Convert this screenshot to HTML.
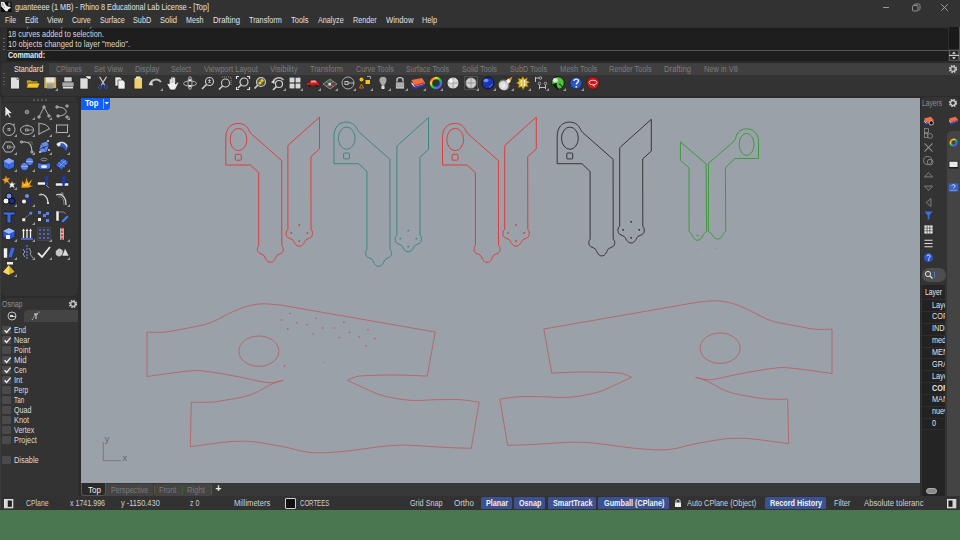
<!DOCTYPE html>
<html><head><meta charset="utf-8">
<style>
*{margin:0;padding:0;box-sizing:border-box}
html,body{width:960px;height:540px;overflow:hidden;background:#2c2c2c;font-family:"Liberation Sans",sans-serif;color:#d8d8d8}
.a{position:absolute}
.t{position:absolute;white-space:nowrap;line-height:10px}
svg{position:absolute;overflow:visible}
</style></head><body>
<div class="a" style="left:0px;top:0px;width:960px;height:27px;background:#323232;"></div>
<svg style="left:0;top:0" width="14" height="14"><rect x="1" y="1.8" width="10.5" height="10.2" fill="#0a0a0a"/><path d="M1,2 L4.3,2 L5.2,4 L7,6.3 L9.5,6.8 L10.9,7.2 L10.4,8.3 L8.2,9.4 L7.6,11.2 L5.6,11.2 L3,8.2 L1.2,6.2 Z" fill="#ededed"/><path d="M2.5,3 L3.2,6 M4,7.5 L5,7" stroke="#555" stroke-width=".6"/><ellipse cx="9.3" cy="4.2" rx="1.2" ry="2" fill="#6a6a6a"/></svg>
<div class="t" style="left:15px;top:2.2px;font-size:8.97px;color:#e2e2e2;;transform:scaleX(0.814);transform-origin:0 0;">guanteeee (1 MB) - Rhino 8 Educational Lab License - [Top]</div>
<div class="a" style="left:883px;top:6.5px;width:6px;height:0.8px;background:#9a9a9a;"></div>
<svg style="left:911px;top:3px" width="10" height="10"><rect x="1.5" y="2.5" width="5.5" height="5.5" rx="1" fill="none" stroke="#9a9a9a" stroke-width=".9"/><path d="M3,2.3 C3,1.3 3.5,1 4.5,1 H7.5 C8.5,1 9,1.5 9,2.5 V5.5 C9,6.5 8.6,7 7.5,7" fill="none" stroke="#9a9a9a" stroke-width=".9"/></svg>
<svg style="left:940px;top:3px" width="10" height="10"><path d="M1.2,1.2 L7.8,7.8 M7.8,1.2 L1.2,7.8" stroke="#a8a8a8" stroke-width=".9"/></svg>
<div class="t" style="left:5px;top:15.1px;font-size:9.08px;color:#e0e0e0;;transform:scaleX(0.751);transform-origin:0 0;">File</div>
<div class="t" style="left:25px;top:15.1px;font-size:9.08px;color:#e0e0e0;;transform:scaleX(0.830);transform-origin:0 0;">Edit</div>
<div class="t" style="left:47px;top:15.1px;font-size:9.08px;color:#e0e0e0;;transform:scaleX(0.820);transform-origin:0 0;">View</div>
<div class="t" style="left:71.75px;top:15.1px;font-size:9.08px;color:#e0e0e0;;transform:scaleX(0.774);transform-origin:0 0;">Curve</div>
<div class="t" style="left:99.5px;top:15.1px;font-size:9.08px;color:#e0e0e0;;transform:scaleX(0.791);transform-origin:0 0;">Surface</div>
<div class="t" style="left:133px;top:15.1px;font-size:9.08px;color:#e0e0e0;;transform:scaleX(0.803);transform-origin:0 0;">SubD</div>
<div class="t" style="left:160px;top:15.1px;font-size:9.08px;color:#e0e0e0;;transform:scaleX(0.842);transform-origin:0 0;">Solid</div>
<div class="t" style="left:186.25px;top:15.1px;font-size:9.08px;color:#e0e0e0;;transform:scaleX(0.788);transform-origin:0 0;">Mesh</div>
<div class="t" style="left:213px;top:15.1px;font-size:9.08px;color:#e0e0e0;;transform:scaleX(0.849);transform-origin:0 0;">Drafting</div>
<div class="t" style="left:249.25px;top:15.1px;font-size:9.08px;color:#e0e0e0;;transform:scaleX(0.798);transform-origin:0 0;">Transform</div>
<div class="t" style="left:291.25px;top:15.1px;font-size:9.08px;color:#e0e0e0;;transform:scaleX(0.825);transform-origin:0 0;">Tools</div>
<div class="t" style="left:318px;top:15.1px;font-size:9.08px;color:#e0e0e0;;transform:scaleX(0.797);transform-origin:0 0;">Analyze</div>
<div class="t" style="left:352.5px;top:15.1px;font-size:9.08px;color:#e0e0e0;;transform:scaleX(0.797);transform-origin:0 0;">Render</div>
<div class="t" style="left:385.5px;top:15.1px;font-size:9.08px;color:#e0e0e0;;transform:scaleX(0.851);transform-origin:0 0;">Window</div>
<div class="t" style="left:422px;top:15.1px;font-size:9.08px;color:#e0e0e0;;transform:scaleX(0.803);transform-origin:0 0;">Help</div>
<div class="a" style="left:1px;top:27px;width:959px;height:34px;background:#2e2e2e;border-radius:3px 0 0 3px"></div>
<div class="a" style="left:7px;top:27.5px;width:941px;height:33.5px;background:#1e1e1e;"></div>
<div class="a" style="left:948.5px;top:27px;width:10.5px;height:21.5px;background:#1a1a1a;"></div>
<div class="a" style="left:959px;top:27px;width:1px;height:34px;background:#555;"></div>
<div class="a" style="left:7px;top:49.5px;width:941.5px;height:0.9px;background:#555555;"></div>
<div class="a" style="left:3px;top:38.0px;width:1.5px;height:1.2px;background:#6a6a6a;"></div>
<div class="a" style="left:3px;top:41.7px;width:1.5px;height:1.2px;background:#6a6a6a;"></div>
<div class="a" style="left:3px;top:45.5px;width:1.5px;height:1.2px;background:#6a6a6a;"></div>
<div class="a" style="left:3px;top:49.3px;width:1.5px;height:1.2px;background:#6a6a6a;"></div>
<svg style="left:25.8px;top:27.2px" width="3" height="3"><path d="M2.4,0.2 L0.8,1.6" stroke="#c8c8c8" stroke-width=".8"/></svg>
<svg style="left:60px;top:27.2px" width="3" height="3"><path d="M2.4,0.2 L0.8,1.6" stroke="#c8c8c8" stroke-width=".8"/></svg>
<svg style="left:89.2px;top:27.2px" width="3" height="3"><path d="M2.4,0.2 L0.8,1.6" stroke="#c8c8c8" stroke-width=".8"/></svg>
<div class="t" style="left:8px;top:29.2px;font-size:9.2px;color:#d8d8d8;;transform:scaleX(0.803);transform-origin:0 0;">18 curves added to selection.</div>
<div class="t" style="left:8px;top:39.2px;font-size:9.2px;color:#d8d8d8;;transform:scaleX(0.819);transform-origin:0 0;">10 objects changed to layer "medio".</div>
<div class="t" style="left:8px;top:49.5px;font-size:8.97px;color:#eeeeee;font-weight:bold;transform:scaleX(0.790);transform-origin:0 0;">Command:</div>
<svg style="left:949px;top:50px" width="10" height="11"><rect x="0.5" y="0.5" width="8.8" height="4.6" fill="#262626" stroke="#777" stroke-width=".6"/><rect x="0.5" y="5.8" width="8.8" height="4.6" fill="#262626" stroke="#777" stroke-width=".6"/><path d="M0,5.4 H10" stroke="#e8e8e8" stroke-width=".9"/><path d="M3,3.8 L4.9,1.8 L6.8,3.8 Z M3,7.2 L4.9,9.2 L6.8,7.2 Z" fill="#eee"/></svg>
<div class="a" style="left:0px;top:61px;width:960px;height:2px;background:#2b2b2b;"></div>
<div class="a" style="left:1px;top:63px;width:959px;height:32.5px;background:#333333;border-radius:5px 0 0 5px"></div>
<div class="a" style="left:49px;top:63px;width:911px;height:12px;background:#404040;"></div>
<div class="a" style="left:1px;top:63px;width:48px;height:12px;background:#333333;border-radius:5px 4px 0 0"></div>
<div class="t" style="left:13.75px;top:64.2px;font-size:9.08px;color:#e6e6e6;;transform:scaleX(0.794);transform-origin:0 0;">Standard</div>
<div class="t" style="left:55.5px;top:64.2px;font-size:9.08px;color:#7c7c7c;;transform:scaleX(0.750);transform-origin:0 0;">CPlanes</div>
<div class="t" style="left:93.75px;top:64.2px;font-size:9.08px;color:#7c7c7c;;transform:scaleX(0.806);transform-origin:0 0;">Set View</div>
<div class="t" style="left:135px;top:64.2px;font-size:9.08px;color:#7c7c7c;;transform:scaleX(0.815);transform-origin:0 0;">Display</div>
<div class="t" style="left:171.25px;top:64.2px;font-size:9.08px;color:#7c7c7c;;transform:scaleX(0.793);transform-origin:0 0;">Select</div>
<div class="t" style="left:203.75px;top:64.2px;font-size:9.08px;color:#7c7c7c;;transform:scaleX(0.828);transform-origin:0 0;">Viewport Layout</div>
<div class="t" style="left:270px;top:64.2px;font-size:9.08px;color:#7c7c7c;;transform:scaleX(0.843);transform-origin:0 0;">Visibility</div>
<div class="t" style="left:310px;top:64.2px;font-size:9.08px;color:#7c7c7c;;transform:scaleX(0.804);transform-origin:0 0;">Transform</div>
<div class="t" style="left:355.5px;top:64.2px;font-size:9.08px;color:#7c7c7c;;transform:scaleX(0.790);transform-origin:0 0;">Curve Tools</div>
<div class="t" style="left:406.25px;top:64.2px;font-size:9.08px;color:#7c7c7c;;transform:scaleX(0.784);transform-origin:0 0;">Surface Tools</div>
<div class="t" style="left:462px;top:64.2px;font-size:9.08px;color:#7c7c7c;;transform:scaleX(0.800);transform-origin:0 0;">Solid Tools</div>
<div class="t" style="left:510px;top:64.2px;font-size:9.08px;color:#7c7c7c;;transform:scaleX(0.800);transform-origin:0 0;">SubD Tools</div>
<div class="t" style="left:559.5px;top:64.2px;font-size:9.08px;color:#7c7c7c;;transform:scaleX(0.814);transform-origin:0 0;">Mesh Tools</div>
<div class="t" style="left:609.25px;top:64.2px;font-size:9.08px;color:#7c7c7c;;transform:scaleX(0.797);transform-origin:0 0;">Render Tools</div>
<div class="t" style="left:664.25px;top:64.2px;font-size:9.08px;color:#7c7c7c;;transform:scaleX(0.849);transform-origin:0 0;">Drafting</div>
<div class="t" style="left:703.75px;top:64.2px;font-size:9.08px;color:#7c7c7c;;transform:scaleX(0.816);transform-origin:0 0;">New in V8</div>
<svg style="left:947.5px;top:63.5px" width="10" height="10"><circle cx="5" cy="5" r="3.3" fill="none" stroke="#c8c8c8" stroke-width="1.7" stroke-dasharray="1.5 1.1"/><circle cx="5" cy="5" r="2.3" fill="none" stroke="#c8c8c8" stroke-width="1.3"/></svg>
<div class="a" style="left:3.2px;top:72.9px;width:1.5px;height:1.2px;background:#5e5e5e;"></div>
<div class="a" style="left:3.2px;top:76.7px;width:1.5px;height:1.2px;background:#5e5e5e;"></div>
<div class="a" style="left:3.2px;top:80.5px;width:1.5px;height:1.2px;background:#5e5e5e;"></div>
<div class="a" style="left:3.2px;top:84.3px;width:1.5px;height:1.2px;background:#5e5e5e;"></div>
<div class="a" style="left:0px;top:95.5px;width:960px;height:2px;background:#2b2b2b;"></div>
<svg style="left:7.0px;top:75.0px" width="16" height="16" viewBox="0 0 16 16"><path d="M3.5,2 H10 L12.5,4.5 V14 H3.5 Z" fill="#dedede" stroke="#222" stroke-width="0.8"/><path d="M10,2 V4.5 H12.5" fill="#fff" stroke="#222" stroke-width="0.5"/></svg>
<svg style="left:24.5px;top:75.0px" width="16" height="16" viewBox="0 0 16 16"><path d="M1.5,5 H6 L7,6 H13 V13 H1.5 Z" fill="#c8a030" stroke="#222" stroke-width="0.6"/><path d="M3,8 H15 L13,13 H1.5 Z" fill="#f2c62a" stroke="#222" stroke-width="0.6"/></svg>
<svg style="left:42.0px;top:75.0px" width="16" height="16" viewBox="0 0 16 16"><rect x="2" y="2" width="12.5" height="11.5" fill="#cbb060" stroke="#222" stroke-width="0.6"/><rect x="4" y="2.5" width="8.5" height="5" fill="#e4e4e4"/><rect x="5" y="9.5" width="6" height="4" fill="#9a9a9a"/></svg>
<svg style="left:55px;top:88px" width="3" height="3"><path d="M3,0 L3,3 L0,3 Z" fill="#9a9a9a"/></svg>
<svg style="left:59.6px;top:75.0px" width="16" height="16" viewBox="0 0 16 16"><path d="M4,2 H12 V7 H4 Z" fill="#d0d0d0" stroke="#222" stroke-width="0.5"/><path d="M2,7 H14 V12 H2 Z" fill="#a8a8a8" stroke="#222" stroke-width="0.6"/><rect x="3" y="12" width="10" height="1.5" fill="#e0e0e0"/></svg>
<svg style="left:77.1px;top:75.0px" width="16" height="16" viewBox="0 0 16 16"><path d="M3,3 H10 L11,4 V14 H3 Z" fill="#dcdcdc" stroke="#222" stroke-width="0.6"/><path d="M8,1 H14 V4 H11 Z" fill="#f0f0f0" stroke="#222" stroke-width="0.5"/></svg>
<svg style="left:94.6px;top:75.0px" width="16" height="16" viewBox="0 0 16 16"><path d="M4.5,1.8 L9.6,10 M11.5,1.8 L6.4,10" stroke="#dcdcdc" stroke-width="1.1"/><circle cx="8" cy="7.6" r=".8" fill="#7a9ae0"/><path d="M6.4,10 C4.5,10.5 3,11.5 3.6,13 C4.2,14.2 6,13.6 6.6,12 Z" fill="none" stroke="#2a52c8" stroke-width="1"/><path d="M9.6,10 C11.5,10.5 13,11.5 12.4,13 C11.8,14.2 10,13.6 9.4,12 Z" fill="none" stroke="#2a52c8" stroke-width="1"/></svg>
<svg style="left:112.1px;top:75.0px" width="16" height="16" viewBox="0 0 16 16"><path d="M3,2 H8 L10,4 V11 H3 Z" fill="#e6e6e6" stroke="#222" stroke-width="0.6"/><path d="M6,5 H11 L13,7 V14 H6 Z" fill="#eeeeee" stroke="#222" stroke-width="0.6"/></svg>
<svg style="left:129.6px;top:75.0px" width="16" height="16" viewBox="0 0 16 16"><rect x="4" y="2.5" width="8.5" height="11.5" rx="1" fill="#ecd070" stroke="#222" stroke-width="0.8"/><rect x="6" y="1.5" width="4.5" height="2" fill="#e8e8e8"/></svg>
<svg style="left:147.2px;top:75.0px" width="16" height="16" viewBox="0 0 16 16"><path d="M3,9 C5,4 11,3 14,7" fill="none" stroke="#bdbdbd" stroke-width="2"/><path d="M1.5,10 L5,6 L6,10.5 Z" fill="#d8d8d8"/></svg>
<svg style="left:160px;top:88px" width="3" height="3"><path d="M3,0 L3,3 L0,3 Z" fill="#9a9a9a"/></svg>
<svg style="left:164.7px;top:75.0px" width="16" height="16" viewBox="0 0 16 16"><path d="M4.2,9 V4.2 C4.2,3.2 5.8,3.2 5.8,4.2 V2.6 C5.8,1.6 7.4,1.6 7.4,2.6 V2 C7.4,1 9,1 9,2 V2.8 C9,1.8 10.6,1.8 10.6,2.8 V9.2 L11.8,7.6 C12.6,6.8 14,7.4 13.4,8.4 L10.6,14.2 C10.2,14.8 9.8,15 9,15 H6.4 C5.4,15 4.9,14.6 4.5,13.8 L2.2,9.6 C1.8,8.6 3,7.9 3.6,8.6 Z" fill="#f0f0f0" stroke="#1a1a1a" stroke-width="0.7"/><path d="M5.8,4.2 V8 M7.4,2.6 V8 M9,2.8 V8" stroke="#999" stroke-width=".5"/></svg>
<svg style="left:182.2px;top:75.0px" width="16" height="16" viewBox="0 0 16 16"><ellipse cx="8" cy="8.5" rx="6.5" ry="2.5" fill="none" stroke="#c0c0c0" stroke-width="0.9"/><ellipse cx="8" cy="8" rx="2" ry="6.5" fill="none" stroke="#c0c0c0" stroke-width="0.9"/><path d="M8,3 L9.5,6 H6.5 Z M8,13 L9.5,10 H6.5 Z" fill="#eee"/></svg>
<svg style="left:199.7px;top:75.0px" width="16" height="16" viewBox="0 0 16 16"><circle cx="9.5" cy="6.5" r="4" fill="none" stroke="#cfcfcf" stroke-width="1.1"/><path d="M6.5,9.5 L2,14" stroke="#d0d0d0" stroke-width="1.6"/><path d="M8,5.5 H11 M8,7.5 H11 M9.5,4 V7" stroke="#cfcfcf" stroke-width="0.7"/></svg>
<svg style="left:217.2px;top:75.0px" width="16" height="16" viewBox="0 0 16 16"><circle cx="8.5" cy="8" r="4" fill="none" stroke="#c8c8c8" stroke-width="1.1"/><path d="M5.5,11 L2,14.5" stroke="#d0d0d0" stroke-width="1.6"/><path d="M5,2 H14 V11" fill="none" stroke="#aaa" stroke-width="0.8" stroke-dasharray="1 1"/></svg>
<svg style="left:234.8px;top:75.0px" width="16" height="16" viewBox="0 0 16 16"><circle cx="9" cy="7" r="4" fill="none" stroke="#d0d0d0" stroke-width="1.2"/><path d="M6,10 L3,13" stroke="#d0d0d0" stroke-width="1.6"/><path d="M1.5,4 V1.5 H4 M12,1.5 H14.5 V4 M1.5,12 V14.5 H4 M12,14.5 H14.5 V12" fill="none" stroke="#e0e0e0" stroke-width="1.2"/></svg>
<svg style="left:252.3px;top:75.0px" width="16" height="16" viewBox="0 0 16 16"><circle cx="9" cy="7" r="4.5" fill="#555" stroke="#cfcfcf" stroke-width="1.1"/><path d="M6,10 L2.5,13.5" stroke="#d0d0d0" stroke-width="1.6"/><circle cx="10" cy="5.5" r="1.6" fill="#f0d000"/><circle cx="8" cy="8" r="1.6" fill="#f0d000"/></svg>
<svg style="left:269.8px;top:75.0px" width="16" height="16" viewBox="0 0 16 16"><circle cx="9" cy="9" r="3.5" fill="none" stroke="#cfcfcf" stroke-width="1.2"/><path d="M6.5,11.5 L3,15" stroke="#d0d0d0" stroke-width="1.6"/><path d="M3,7 C4,3 10,1 13.5,5" fill="none" stroke="#bdbdbd" stroke-width="1.4"/><path d="M1,7 L4.5,5 L4.5,9 Z" fill="#ddd"/></svg>
<svg style="left:283px;top:88px" width="3" height="3"><path d="M3,0 L3,3 L0,3 Z" fill="#9a9a9a"/></svg>
<svg style="left:287.3px;top:75.0px" width="16" height="16" viewBox="0 0 16 16"><rect x="2" y="2" width="12" height="12" fill="#1a1a1a"/><rect x="2.5" y="2.5" width="5" height="5" fill="#d8d8d8"/><rect x="8.5" y="2.5" width="5" height="5" fill="#d8d8d8"/><rect x="2.5" y="8.5" width="5" height="5" fill="#d8d8d8"/><rect x="8.5" y="8.5" width="5" height="5" fill="#d8d8d8"/><rect x="8.5" y="1.5" width="3" height="1" fill="#2040a0"/></svg>
<svg style="left:300px;top:88px" width="3" height="3"><path d="M3,0 L3,3 L0,3 Z" fill="#9a9a9a"/></svg>
<svg style="left:304.8px;top:75.0px" width="16" height="16" viewBox="0 0 16 16"><path d="M1.5,10 V8 L4,7.5 L6,5 H11 L13,7.5 L14.5,8 V10.5 H1.5 Z" fill="#d81818" stroke="#222" stroke-width="0.4"/><path d="M6.5,5.5 H10.5 L12,7.5 H5.5 Z" fill="#f0a0a0"/><circle cx="4.5" cy="11" r="1.3" fill="#222"/><circle cx="11.5" cy="11" r="1.3" fill="#222"/></svg>
<svg style="left:318px;top:88px" width="3" height="3"><path d="M3,0 L3,3 L0,3 Z" fill="#9a9a9a"/></svg>
<svg style="left:322.4px;top:75.0px" width="16" height="16" viewBox="0 0 16 16"><path d="M1,9 L8,4 L15,9 L8,14 Z" fill="#4a4a4a" stroke="#bbb" stroke-width="0.6"/><path d="M4.5,6.5 L11.5,11.5 M11.5,6.5 L4.5,11.5" stroke="#bbb" stroke-width="0.5"/><path d="M8,9 L8,4" stroke="#20c020" stroke-width="1"/><path d="M8,9 L13,11" stroke="#e02020" stroke-width="1.2"/><rect x="6.5" y="8" width="2.5" height="2.5" fill="#ddd"/></svg>
<svg style="left:335px;top:88px" width="3" height="3"><path d="M3,0 L3,3 L0,3 Z" fill="#9a9a9a"/></svg>
<svg style="left:339.9px;top:75.0px" width="16" height="16" viewBox="0 0 16 16"><circle cx="8" cy="8" r="6" fill="none" stroke="#c8c8c8" stroke-width="0.8"/><rect x="5" y="6.5" width="3" height="3" fill="none" stroke="#ddd" stroke-width="0.8"/><path d="M8,8 H14" stroke="#ddd" stroke-width="0.8"/></svg>
<svg style="left:353px;top:88px" width="3" height="3"><path d="M3,0 L3,3 L0,3 Z" fill="#9a9a9a"/></svg>
<svg style="left:357.4px;top:75.0px" width="16" height="16" viewBox="0 0 16 16"><circle cx="4.5" cy="4.5" r="2" fill="#f8c010"/><rect x="8.5" y="5" width="4.5" height="4" fill="#f8c010"/><path d="M4.5,9 L6.5,13 H2.5 Z" fill="none" stroke="#e07010" stroke-width="0.9"/><path d="M10,1.5 H13.5 V4" fill="none" stroke="#ccc" stroke-width="0.7"/></svg>
<svg style="left:370px;top:88px" width="3" height="3"><path d="M3,0 L3,3 L0,3 Z" fill="#9a9a9a"/></svg>
<svg style="left:374.9px;top:75.0px" width="16" height="16" viewBox="0 0 16 16"><path d="M8,1.5 C11.5,1.5 12.5,4.5 11.5,7 L9.5,10.5 V13 H6.5 V10.5 L4.5,7 C3.5,4.5 4.5,1.5 8,1.5 Z" fill="#a8a8a8" stroke="#222" stroke-width="0.5"/><rect x="6.5" y="11" width="3" height="3" fill="#e0e0e0"/></svg>
<svg style="left:388px;top:88px" width="3" height="3"><path d="M3,0 L3,3 L0,3 Z" fill="#9a9a9a"/></svg>
<svg style="left:392.4px;top:75.0px" width="16" height="16" viewBox="0 0 16 16"><path d="M5,7 V4.5 C5,2 11,2 11,4.5 V7" fill="none" stroke="#c8c8c8" stroke-width="1.4"/><rect x="3.5" y="7" width="9" height="7" fill="#bdbdbd" stroke="#222" stroke-width="0.6"/><path d="M4,9 H12 M4,11 H12" stroke="#888" stroke-width="0.6"/></svg>
<svg style="left:405px;top:88px" width="3" height="3"><path d="M3,0 L3,3 L0,3 Z" fill="#9a9a9a"/></svg>
<svg style="left:410.0px;top:75.0px" width="16" height="16" viewBox="0 0 16 16"><path d="M1.5,5 L12,3 L14.5,7 L4,10 Z" fill="#f07040"/><path d="M1.5,7 L4,10 L14.5,7 L14.5,9 L4,12 L1.5,9 Z" fill="#e8e8e8"/><path d="M1.5,9 L4,12 L14.5,9 L14.5,11 L4,14 L1.5,11 Z" fill="#2040c0"/><path d="M4,10 L14.5,7 V8.5 L4,11.5 Z" fill="#e02020"/></svg>
<svg style="left:423px;top:88px" width="3" height="3"><path d="M3,0 L3,3 L0,3 Z" fill="#9a9a9a"/></svg>
<svg style="left:427.5px;top:75.0px" width="16" height="16" viewBox="0 0 16 16"><circle cx="8" cy="8" r="5" fill="none" stroke="url(#cw)" stroke-width="2.4"/><defs><linearGradient id="cw" x1="0" y1="0" x2="1" y2="1"><stop offset="0" stop-color="#ff2020"/><stop offset=".25" stop-color="#f0e020"/><stop offset=".5" stop-color="#20d040"/><stop offset=".75" stop-color="#2080ff"/><stop offset="1" stop-color="#c020e0"/></linearGradient></defs></svg>
<svg style="left:440px;top:88px" width="3" height="3"><path d="M3,0 L3,3 L0,3 Z" fill="#9a9a9a"/></svg>
<svg style="left:445.0px;top:75.0px" width="16" height="16" viewBox="0 0 16 16"><circle cx="8" cy="8" r="6" fill="#d8d8d8" stroke="#222" stroke-width="0.8"/><path d="M2,8 H14 M8,2 V14" stroke="#777" stroke-width="0.5"/><circle cx="6" cy="6" r="2" fill="#f4f4f4"/></svg>
<svg style="left:462.5px;top:75.0px" width="16" height="16" viewBox="0 0 16 16"><rect x="1.5" y="1.5" width="13" height="13" fill="none" stroke="#999" stroke-width="0.6" stroke-dasharray="1 1"/><circle cx="8" cy="8" r="5.5" fill="#d0d0d0" stroke="#444" stroke-width="0.6"/><path d="M2.5,8 H13.5 M8,2.5 V13.5" stroke="#666" stroke-width="0.5"/></svg>
<svg style="left:476px;top:88px" width="3" height="3"><path d="M3,0 L3,3 L0,3 Z" fill="#9a9a9a"/></svg>
<svg style="left:480.0px;top:75.0px" width="16" height="16" viewBox="0 0 16 16"><circle cx="8" cy="8" r="6" fill="#1a35b5" stroke="#0a0a0a" stroke-width="0.8"/><ellipse cx="6" cy="5.5" rx="2.5" ry="1.8" fill="#6a90f0"/><path d="M9,12 C11,11.5 12,10 12.5,9" stroke="#6a90f0" stroke-width="0.8" fill="none"/></svg>
<svg style="left:493px;top:88px" width="3" height="3"><path d="M3,0 L3,3 L0,3 Z" fill="#9a9a9a"/></svg>
<svg style="left:497.6px;top:75.0px" width="16" height="16" viewBox="0 0 16 16"><defs><radialGradient id="rg" cx=".4" cy=".6" r=".6"><stop offset="0" stop-color="#f4f4f4"/><stop offset=".6" stop-color="#cfcfcf"/><stop offset="1" stop-color="#555" stop-opacity="0"/></radialGradient></defs><circle cx="6.5" cy="9.5" r="6" fill="url(#rg)"/><path d="M9.5,4.5 L14.5,1.5 L12,8 Z" fill="#f29a12"/><path d="M8,5.5 L10.5,3.5 L12.5,6.5 L10,9 Z" fill="#f4f4f4"/></svg>
<svg style="left:511px;top:88px" width="3" height="3"><path d="M3,0 L3,3 L0,3 Z" fill="#9a9a9a"/></svg>
<svg style="left:515.1px;top:75.0px" width="16" height="16" viewBox="0 0 16 16"><path d="M8,1 L9.3,4 L12.5,2.5 L11.8,5.8 L15,7 L12,8.8 L13.5,12 L10.2,11.5 L8,15 L6.5,11.8 L3,13 L4,9.5 L1,8 L4,6.2 L2.8,3 L6.3,4 Z" fill="#e8b828" stroke="#5a4a10" stroke-width=".6"/><path d="M6.5,5 V11 M9.5,5 V11" stroke="#f4f4f4" stroke-width="1.3"/><path d="M6,8 H10" stroke="#bbb" stroke-width=".8"/></svg>
<svg style="left:528px;top:88px" width="3" height="3"><path d="M3,0 L3,3 L0,3 Z" fill="#9a9a9a"/></svg>
<svg style="left:532.6px;top:75.0px" width="16" height="16" viewBox="0 0 16 16"><path d="M2.5,2 V7 M2.5,3 H6.5 M6.5,12.5 H12.5 M6.5,10 V14 M12.5,10 V14" stroke="#cfcfcf" stroke-width="0.9" fill="none"/><circle cx="7.5" cy="3" r="1.3" fill="none" stroke="#ccc" stroke-width=".7"/><circle cx="6.5" cy="8.5" r="1.3" fill="none" stroke="#ccc" stroke-width=".7"/><circle cx="12.5" cy="8.5" r="1.3" fill="none" stroke="#ccc" stroke-width=".7"/></svg>
<svg style="left:546px;top:88px" width="3" height="3"><path d="M3,0 L3,3 L0,3 Z" fill="#9a9a9a"/></svg>
<svg style="left:550.1px;top:75.0px" width="16" height="16" viewBox="0 0 16 16"><circle cx="8" cy="8" r="6.3" fill="#4cc43a" stroke="#111" stroke-width="0.9"/><path d="M2.5,9 C3,12 6,14.3 9,14 C7,12 6,10 7,8 C5.5,8.5 4,8.8 2.5,9 Z" fill="#111"/><ellipse cx="5.3" cy="5.3" rx="2.6" ry="2.2" fill="#e0e0e0"/><path d="M9,9 C11,9.5 12,11 12,12" stroke="#111" stroke-width="1" fill="none"/></svg>
<svg style="left:563px;top:88px" width="3" height="3"><path d="M3,0 L3,3 L0,3 Z" fill="#9a9a9a"/></svg>
<svg style="left:567.6px;top:75.0px" width="16" height="16" viewBox="0 0 16 16"><circle cx="8" cy="8" r="6" fill="#2a55c8" stroke="#1a1a1a" stroke-width="0.6"/><path d="M6,6 C6,3.5 10.5,3.5 10.5,6 C10.5,7.5 8.3,7.8 8.3,9.5" fill="none" stroke="#f0f0f0" stroke-width="1.4"/><rect x="7.5" y="11" width="1.6" height="1.6" fill="#f0f0f0"/></svg>
<svg style="left:581px;top:88px" width="3" height="3"><path d="M3,0 L3,3 L0,3 Z" fill="#9a9a9a"/></svg>
<svg style="left:585.2px;top:75.0px" width="16" height="16" viewBox="0 0 16 16"><circle cx="8" cy="8" r="6.2" fill="#c81818" stroke="#1a1a1a" stroke-width="0.6"/><ellipse cx="8" cy="7.5" rx="4" ry="2.3" fill="none" stroke="#f0c0c0" stroke-width="1"/><path d="M7.5,10 L10,11.5" stroke="#f0c0c0" stroke-width="1"/></svg>
<div class="a" style="left:1px;top:97px;width:77px;height:199px;background:#333333;border-radius:5px"></div>
<div class="a" style="left:33px;top:99px;width:2px;height:2px;background:#5c5c5c;border-radius:1px"></div>
<div class="a" style="left:37px;top:99px;width:2px;height:2px;background:#5c5c5c;border-radius:1px"></div>
<div class="a" style="left:41px;top:99px;width:2px;height:2px;background:#5c5c5c;border-radius:1px"></div>
<div class="a" style="left:45px;top:99px;width:2px;height:2px;background:#5c5c5c;border-radius:1px"></div>
<div class="a" style="left:2px;top:102px;width:75px;height:1px;background:#2a2a2a;"></div>
<svg style="left:1.4px;top:103.7px" width="16" height="16" viewBox="0 0 16 16"><path d="M4,2 L4,13 L6.5,10.5 L8.5,14 L10,13 L8,9.5 L11.5,9.5 Z" fill="#e8e8e8" stroke="#222" stroke-width="0.6"/></svg>
<svg style="left:18.9px;top:103.7px" width="16" height="16" viewBox="0 0 16 16"><circle cx="8" cy="8" r="1.8" fill="none" stroke="#bbb" stroke-width="0.8"/><circle cx="8" cy="8" r="0.7" fill="#ddd"/></svg>
<svg style="left:32px;top:117px" width="3" height="3"><path d="M3,0 L3,3 L0,3 Z" fill="#9a9a9a"/></svg>
<svg style="left:36.4px;top:103.7px" width="16" height="16" viewBox="0 0 16 16"><path d="M3,13 L8,3 L13,12" fill="none" stroke="#c4c4c4" stroke-width="0.8"/><circle cx="3" cy="13" r="1.3" fill="#888" stroke="#c4c4c4" stroke-width=".6"/><circle cx="8" cy="3" r="1.3" fill="#888" stroke="#c4c4c4" stroke-width=".6"/><circle cx="13" cy="12" r="1.3" fill="#888" stroke="#c4c4c4" stroke-width=".6"/></svg>
<svg style="left:49px;top:117px" width="3" height="3"><path d="M3,0 L3,3 L0,3 Z" fill="#9a9a9a"/></svg>
<svg style="left:53.9px;top:103.7px" width="16" height="16" viewBox="0 0 16 16"><path d="M3,3 C15,3 15,12 4,12" fill="none" stroke="#c4c4c4" stroke-width="0.9"/><circle cx="3" cy="3" r="1.3" fill="#888" stroke="#c4c4c4" stroke-width=".6"/><circle cx="4" cy="12" r="1.3" fill="#888" stroke="#c4c4c4" stroke-width=".6"/><circle cx="13" cy="2" r="1.3" fill="#888" stroke="#c4c4c4" stroke-width=".6"/><circle cx="13" cy="13" r="1.3" fill="#888" stroke="#c4c4c4" stroke-width=".6"/></svg>
<svg style="left:67px;top:117px" width="3" height="3"><path d="M3,0 L3,3 L0,3 Z" fill="#9a9a9a"/></svg>
<svg style="left:1.4px;top:121.2px" width="16" height="16" viewBox="0 0 16 16"><circle cx="8" cy="8.5" r="6" fill="none" stroke="#c4c4c4" stroke-width="0.9"/><rect x="7" y="7.5" width="2" height="2" fill="none" stroke="#c4c4c4" stroke-width=".7"/><circle cx="13" cy="3.5" r="1" fill="#999"/></svg>
<svg style="left:14px;top:134px" width="3" height="3"><path d="M3,0 L3,3 L0,3 Z" fill="#9a9a9a"/></svg>
<svg style="left:18.9px;top:121.2px" width="16" height="16" viewBox="0 0 16 16"><ellipse cx="8" cy="9" rx="6.5" ry="4.5" fill="none" stroke="#c4c4c4" stroke-width="0.9"/><rect x="6.5" y="8" width="2.5" height="2" fill="none" stroke="#c4c4c4" stroke-width=".7"/><circle cx="8" cy="4.5" r="1" fill="#999"/><path d="M8,9 H14" stroke="#c4c4c4" stroke-width=".6"/></svg>
<svg style="left:32px;top:134px" width="3" height="3"><path d="M3,0 L3,3 L0,3 Z" fill="#9a9a9a"/></svg>
<svg style="left:36.4px;top:121.2px" width="16" height="16" viewBox="0 0 16 16"><path d="M3,2.5 C10,2.5 13,6 13,8 L3,13 Z" fill="none" stroke="#c4c4c4" stroke-width="0.9"/><circle cx="3" cy="2.5" r="1.1" fill="#888"/><circle cx="3" cy="13" r="1.1" fill="#888"/><circle cx="13" cy="8" r="1.1" fill="#888"/></svg>
<svg style="left:49px;top:134px" width="3" height="3"><path d="M3,0 L3,3 L0,3 Z" fill="#9a9a9a"/></svg>
<svg style="left:53.9px;top:121.2px" width="16" height="16" viewBox="0 0 16 16"><rect x="2.5" y="4" width="11" height="7.5" fill="none" stroke="#c4c4c4" stroke-width="0.9"/><circle cx="2.5" cy="11.5" r="1.1" fill="#888"/><circle cx="13.5" cy="4" r="1.1" fill="#888"/></svg>
<svg style="left:67px;top:134px" width="3" height="3"><path d="M3,0 L3,3 L0,3 Z" fill="#9a9a9a"/></svg>
<svg style="left:1.4px;top:138.7px" width="16" height="16" viewBox="0 0 16 16"><path d="M4.5,3 H10.5 L14,8 L10.5,13 H4.5 L1.5,8 Z" fill="none" stroke="#c4c4c4" stroke-width="0.9"/><rect x="6.5" y="7" width="2.5" height="2" fill="none" stroke="#c4c4c4" stroke-width=".7"/><path d="M9,8 H13" stroke="#c4c4c4" stroke-width=".6"/></svg>
<svg style="left:14px;top:152px" width="3" height="3"><path d="M3,0 L3,3 L0,3 Z" fill="#9a9a9a"/></svg>
<svg style="left:18.9px;top:138.7px" width="16" height="16" viewBox="0 0 16 16"><path d="M2,3 H6 C11,3 13,7 13,13" fill="none" stroke="#c4c4c4" stroke-width="1.1"/><circle cx="2.5" cy="3" r="1.3" fill="#888" stroke="#c4c4c4" stroke-width=".5"/><circle cx="13" cy="13" r="1.3" fill="#888" stroke="#c4c4c4" stroke-width=".5"/><path d="M9,3 H13 V6" fill="none" stroke="#888" stroke-width=".6"/></svg>
<svg style="left:32px;top:152px" width="3" height="3"><path d="M3,0 L3,3 L0,3 Z" fill="#9a9a9a"/></svg>
<svg style="left:36.4px;top:138.7px" width="16" height="16" viewBox="0 0 16 16"><path d="M3,10 L5,4 L11,2 L13,6 L11,13 L5,14 Z" fill="#6a8ae8" stroke="#111" stroke-width="0.5"/><path d="M5,4 L8,9 L11,13 M3,10 L8,9 L13,6" stroke="#3050b0" stroke-width="0.5"/><circle cx="4" cy="13" r=".9" fill="#eee"/><circle cx="12" cy="2" r=".9" fill="#eee"/><circle cx="13" cy="11" r=".9" fill="#eee"/></svg>
<svg style="left:49px;top:152px" width="3" height="3"><path d="M3,0 L3,3 L0,3 Z" fill="#9a9a9a"/></svg>
<svg style="left:53.9px;top:138.7px" width="16" height="16" viewBox="0 0 16 16"><path d="M2,5 C6,1 12,2 14,7 L12,12 C11,8 7,6 4,8 Z" fill="#e8e8e8" stroke="#222" stroke-width=".5"/><path d="M7,4 C10,4 12,6 13,9 L12,12 C11,9 9,7 6,7 Z" fill="#2a5ad8"/></svg>
<svg style="left:67px;top:152px" width="3" height="3"><path d="M3,0 L3,3 L0,3 Z" fill="#9a9a9a"/></svg>
<svg style="left:1.4px;top:156.2px" width="16" height="16" viewBox="0 0 16 16"><path d="M2.5,5 L8,2 L13.5,5 V11 L8,14 L2.5,11 Z" fill="#3e6ae0" stroke="#111" stroke-width=".5"/><path d="M2.5,5 L8,8 L13.5,5 L8,2 Z" fill="#8aa8f4"/><path d="M8,8 V14" stroke="#2040a0" stroke-width=".5"/></svg>
<svg style="left:14px;top:169px" width="3" height="3"><path d="M3,0 L3,3 L0,3 Z" fill="#9a9a9a"/></svg>
<svg style="left:18.9px;top:156.2px" width="16" height="16" viewBox="0 0 16 16"><circle cx="10.5" cy="5.5" r="4" fill="#5a80e8" stroke="#111" stroke-width=".5"/><circle cx="5.5" cy="10.5" r="4" fill="#5a80e8" stroke="#111" stroke-width=".5"/><path d="M2,10.5 H9 M7,5.5 H14" stroke="#c8d4f8" stroke-width=".6"/></svg>
<svg style="left:32px;top:169px" width="3" height="3"><path d="M3,0 L3,3 L0,3 Z" fill="#9a9a9a"/></svg>
<svg style="left:36.4px;top:156.2px" width="16" height="16" viewBox="0 0 16 16"><ellipse cx="8" cy="3.5" rx="3" ry="1.3" fill="none" stroke="#aaa" stroke-width=".7"/><path d="M1.5,6.5 C5,8 11,8 14.5,6.5 V12 C11,14 5,14 1.5,12 Z" fill="#4a72e0" stroke="#111" stroke-width=".5"/><ellipse cx="8" cy="10.5" rx="3" ry="1.6" fill="#e0e8ff"/></svg>
<svg style="left:49px;top:169px" width="3" height="3"><path d="M3,0 L3,3 L0,3 Z" fill="#9a9a9a"/></svg>
<svg style="left:53.9px;top:156.2px" width="16" height="16" viewBox="0 0 16 16"><path d="M1.5,9 L9,2 L15,6 L7.5,14 Z" fill="#3a66d8" stroke="#111" stroke-width=".5"/><path d="M4,6.5 L11,11 M6.5,4 L13,8.5 M5,11 L12,4" stroke="#a0b8f8" stroke-width=".6"/></svg>
<svg style="left:67px;top:169px" width="3" height="3"><path d="M3,0 L3,3 L0,3 Z" fill="#9a9a9a"/></svg>
<svg style="left:1.4px;top:173.7px" width="16" height="16" viewBox="0 0 16 16"><path d="M5,1.5 L6,4.5 L9,4 L7,6.5 L8.5,9 L5.5,8 L3.5,10 L3.5,7 L1,5.5 L4,4.5 Z" fill="#f0a020"/><path d="M11,7 L11.7,9.5 L14.5,9.5 L12.5,11 L13.5,14 L11,12.5 L8.5,14 L9.5,11 L7.5,9.5 L10.3,9.5 Z" fill="#f4f4f4"/></svg>
<svg style="left:14px;top:187px" width="3" height="3"><path d="M3,0 L3,3 L0,3 Z" fill="#9a9a9a"/></svg>
<svg style="left:18.9px;top:173.7px" width="16" height="16" viewBox="0 0 16 16"><path d="M2,14 L3,6 L5.5,9.5 L8,2 L9,9 L14,4 L11,11 L15,12 L9,14 Z" fill="#f09a10" stroke="#222" stroke-width=".5"/><path d="M4,12 L5,9.5 L7,11 L9,7 L9.5,11.5 Z" fill="#f8d020"/></svg>
<svg style="left:36.4px;top:173.7px" width="16" height="16" viewBox="0 0 16 16"><rect x="1.5" y="8" width="10" height="3" fill="#f0f0f0" stroke="#222" stroke-width=".5"/><path d="M9,2 H12.5 L11,11 H9 Z" fill="#1a3ab0"/><path d="M10,11 L13,14" stroke="#999" stroke-width="1"/></svg>
<svg style="left:53.9px;top:173.7px" width="16" height="16" viewBox="0 0 16 16"><rect x="1.5" y="9" width="13" height="3" fill="#f0f0f0" stroke="#222" stroke-width=".5"/><path d="M8,2.5 H12 L10.5,12 H8.5 Z" fill="#1a3ab0"/></svg>
<svg style="left:1.4px;top:191.2px" width="16" height="16" viewBox="0 0 16 16"><circle cx="8" cy="5" r="3" fill="#6a90f0" stroke="#000" stroke-width=".8"/><circle cx="5" cy="10" r="3" fill="#f4f4f4" stroke="#000" stroke-width=".8"/><circle cx="11" cy="10" r="3" fill="#1a2e90" stroke="#000" stroke-width=".8"/></svg>
<svg style="left:14px;top:204px" width="3" height="3"><path d="M3,0 L3,3 L0,3 Z" fill="#9a9a9a"/></svg>
<svg style="left:18.9px;top:191.2px" width="16" height="16" viewBox="0 0 16 16"><circle cx="8" cy="5" r="2" fill="#6a90f0"/><circle cx="5" cy="10.5" r="2" fill="#f4f4f4"/><circle cx="11" cy="10.5" r="2" fill="#1a2e90"/></svg>
<svg style="left:32px;top:204px" width="3" height="3"><path d="M3,0 L3,3 L0,3 Z" fill="#9a9a9a"/></svg>
<svg style="left:36.4px;top:191.2px" width="16" height="16" viewBox="0 0 16 16"><path d="M3,4 C8,2 12,6 12,13" fill="none" stroke="#d8d8d8" stroke-width="1.3"/><circle cx="5" cy="3.5" r="1" fill="#bbb"/><circle cx="12" cy="12" r="1" fill="#eee"/></svg>
<svg style="left:53.9px;top:191.2px" width="16" height="16" viewBox="0 0 16 16"><path d="M2,4 C8,2 12,6 12,14" fill="none" stroke="#d8d8d8" stroke-width="1.2"/><path d="M4,6 C8,5 10,8 10,14" fill="none" stroke="#bbb" stroke-width=".6"/><circle cx="8" cy="3" r="1.2" fill="none" stroke="#ccc" stroke-width=".6"/></svg>
<svg style="left:67px;top:204px" width="3" height="3"><path d="M3,0 L3,3 L0,3 Z" fill="#9a9a9a"/></svg>
<svg style="left:1.4px;top:208.7px" width="16" height="16" viewBox="0 0 16 16"><path d="M2,3 H14 V6 H10 V14 H6 V6 H2 Z" fill="#3a66e0" stroke="#111" stroke-width=".6"/></svg>
<svg style="left:18.9px;top:208.7px" width="16" height="16" viewBox="0 0 16 16"><rect x="3" y="9" width="3.5" height="3.5" fill="#f0f0f0" stroke="#222" stroke-width=".5"/><rect x="10" y="2.5" width="3.5" height="3.5" fill="#5a80f0" stroke="#222" stroke-width=".5"/><path d="M6,9 L10,6" stroke="#bbb" stroke-width=".7" stroke-dasharray="1 .8"/></svg>
<svg style="left:32px;top:222px" width="3" height="3"><path d="M3,0 L3,3 L0,3 Z" fill="#9a9a9a"/></svg>
<svg style="left:36.4px;top:208.7px" width="16" height="16" viewBox="0 0 16 16"><rect x="2" y="2" width="3" height="3" fill="#5a80f0"/><rect x="7" y="5" width="3" height="3" fill="#5a80f0"/><rect x="2" y="9" width="3" height="3" fill="#f0f0f0"/><rect x="10" y="10" width="3" height="3" fill="#5a80f0"/><rect x="10" y="3" width="3" height="3" fill="#5a80f0"/></svg>
<svg style="left:53.9px;top:208.7px" width="16" height="16" viewBox="0 0 16 16"><rect x="2" y="2" width="3" height="10" fill="#f0f0f0" stroke="#222" stroke-width=".5"/><path d="M7,12 L13,6 L15,8 L9,14 Z" fill="#4a76e8" stroke="#222" stroke-width=".5"/><path d="M5,3 H10 L12,5" fill="none" stroke="#bbb" stroke-width=".6"/></svg>
<svg style="left:1.4px;top:226.2px" width="16" height="16" viewBox="0 0 16 16"><path d="M2,5 L8,2 L14,5 V11 L8,14 L2,11 Z" fill="#2a56d0" stroke="#111" stroke-width=".5"/><path d="M2,5 L8,8 L14,5 L8,2 Z" fill="#9ab4f4"/><rect x="5" y="9" width="4" height="4" fill="#f0f0f0"/></svg>
<svg style="left:14px;top:239px" width="3" height="3"><path d="M3,0 L3,3 L0,3 Z" fill="#9a9a9a"/></svg>
<svg style="left:18.9px;top:226.2px" width="16" height="16" viewBox="0 0 16 16"><path d="M2,13 H14" stroke="#4a76e8" stroke-width="1.6"/><path d="M4.5,12 V4 M8,12 V4 M11.5,12 V4" stroke="#f0f0f0" stroke-width="1.3"/><path d="M3,5 L4.5,2.5 L6,5 M6.5,5 L8,2.5 L9.5,5 M10,5 L11.5,2.5 L13,5" fill="#f0f0f0"/></svg>
<svg style="left:32px;top:239px" width="3" height="3"><path d="M3,0 L3,3 L0,3 Z" fill="#9a9a9a"/></svg>
<svg style="left:36.4px;top:226.2px" width="16" height="16" viewBox="0 0 16 16"><rect x="1.5" y="1.5" width="13" height="13" fill="#3a3a3a" stroke="#555" stroke-width=".5"/><g fill="#4a76e8"><circle cx="4" cy="4" r="1"/><circle cx="8" cy="4" r="1"/><circle cx="12" cy="4" r="1"/><circle cx="4" cy="8" r="1"/><circle cx="8" cy="8" r="1"/><circle cx="12" cy="8" r="1"/><circle cx="4" cy="12" r="1"/><circle cx="8" cy="12" r="1"/><circle cx="12" cy="12" r="1"/></g></svg>
<svg style="left:49px;top:239px" width="3" height="3"><path d="M3,0 L3,3 L0,3 Z" fill="#9a9a9a"/></svg>
<svg style="left:53.9px;top:226.2px" width="16" height="16" viewBox="0 0 16 16"><rect x="6" y="2" width="4" height="12" fill="#d8d8d8" stroke="#222" stroke-width=".4"/><path d="M8,1 V15" stroke="#e01010" stroke-width="1.4" stroke-dasharray="2.5 1"/></svg>
<svg style="left:67px;top:239px" width="3" height="3"><path d="M3,0 L3,3 L0,3 Z" fill="#9a9a9a"/></svg>
<svg style="left:1.4px;top:243.7px" width="16" height="16" viewBox="0 0 16 16"><rect x="2.5" y="4" width="4" height="10" fill="#f0f0f0" stroke="#222" stroke-width=".5"/><path d="M7,13 L10,3 L14,4 L11,14 Z" fill="#3a66e0" stroke="#222" stroke-width=".5"/></svg>
<svg style="left:14px;top:257px" width="3" height="3"><path d="M3,0 L3,3 L0,3 Z" fill="#9a9a9a"/></svg>
<svg style="left:18.9px;top:243.7px" width="16" height="16" viewBox="0 0 16 16"><path d="M8,1 V15" stroke="#4a76e8" stroke-width="1.4" stroke-dasharray="2 1"/><path d="M4,5 L6,8 L4,10 L6,13" fill="none" stroke="#bbb" stroke-width=".8"/><path d="M10,4 L12,8 L11,10 L14,14" fill="none" stroke="#bbb" stroke-width=".8"/></svg>
<svg style="left:32px;top:257px" width="3" height="3"><path d="M3,0 L3,3 L0,3 Z" fill="#9a9a9a"/></svg>
<svg style="left:36.4px;top:243.7px" width="16" height="16" viewBox="0 0 16 16"><path d="M2,9 L6,13 L14,3" fill="none" stroke="#e8e8e8" stroke-width="1.8"/></svg>
<svg style="left:49px;top:257px" width="3" height="3"><path d="M3,0 L3,3 L0,3 Z" fill="#9a9a9a"/></svg>
<svg style="left:53.9px;top:243.7px" width="16" height="16" viewBox="0 0 16 16"><path d="M1.5,7 L5,4 L9,6 L9,11 L5,13 L1.5,11 Z" fill="#c8c8c8" stroke="#222" stroke-width=".5"/><path d="M11,4 L15,12 H8 Z" fill="#e0e0e0" stroke="#222" stroke-width=".5"/></svg>
<svg style="left:67px;top:257px" width="3" height="3"><path d="M3,0 L3,3 L0,3 Z" fill="#9a9a9a"/></svg>
<svg style="left:1.4px;top:261.2px" width="16" height="16" viewBox="0 0 16 16"><path d="M8,4 L14,11 L8,14 L2,11 Z" fill="#e0b030" stroke="#222" stroke-width=".5"/><path d="M8,4 L8,14 L2,11 Z" fill="#f8d860"/><rect x="6" y="1" width="6" height="2.5" fill="#f0f0f0"/></svg>
<svg style="left:14px;top:274px" width="3" height="3"><path d="M3,0 L3,3 L0,3 Z" fill="#9a9a9a"/></svg>
<div class="a" style="left:1px;top:298px;width:77px;height:198px;background:#333333;border-radius:5px 5px 0 0"></div>
<div class="t" style="left:1.5px;top:299px;font-size:9.08px;color:#8a8f96;;transform:scaleX(0.766);transform-origin:0 0;">Osnap</div>
<svg style="left:67.5px;top:298.5px" width="10" height="10"><circle cx="5" cy="5" r="3.3" fill="none" stroke="#c8c8c8" stroke-width="1.7" stroke-dasharray="1.5 1.1"/><circle cx="5" cy="5" r="2.3" fill="none" stroke="#c8c8c8" stroke-width="1.3"/></svg>
<div class="a" style="left:24px;top:310px;width:54px;height:12px;background:#444444;border-radius:4px 0 0 0"></div>
<svg style="left:6px;top:310px" width="12" height="12"><circle cx="6" cy="6" r="4" fill="none" stroke="#cfcfcf" stroke-width=".9"/><rect x="4" y="5" width="3" height="2" fill="#ddd"/><path d="M7,6.5 H10" stroke="#ddd" stroke-width=".8"/></svg>
<svg style="left:29px;top:310px" width="12" height="12"><path d="M3,10 L6,5 L9,3" stroke="#bbb" stroke-width="1" stroke-dasharray="1.2 .8" fill="none"/><path d="M5,4 H9 M7,4 V9" stroke="#ddd" stroke-width="1"/><circle cx="10" cy="2" r=".6" fill="#ddd"/></svg>
<div class="a" style="left:2.2px;top:326.0px;width:8.9px;height:8px;background:#4a4a4a;border-radius:1px"></div>
<svg style="left:2.5px;top:325.8px" width="9" height="8"><path d="M1.6,4.2 L3.6,6.4 L7.6,1.6" fill="none" stroke="#f4f4f4" stroke-width="1.3"/></svg>
<div class="t" style="left:13.8px;top:324.6px;font-size:9.08px;color:#dcdcdc;;transform:scaleX(0.749);transform-origin:0 0;">End</div>
<div class="a" style="left:2.2px;top:336.0px;width:8.9px;height:8px;background:#4a4a4a;border-radius:1px"></div>
<svg style="left:2.5px;top:335.8px" width="9" height="8"><path d="M1.6,4.2 L3.6,6.4 L7.6,1.6" fill="none" stroke="#f4f4f4" stroke-width="1.3"/></svg>
<div class="t" style="left:13.8px;top:334.6px;font-size:9.08px;color:#dcdcdc;;transform:scaleX(0.803);transform-origin:0 0;">Near</div>
<div class="a" style="left:2.2px;top:346.0px;width:8.9px;height:8px;background:#4a4a4a;border-radius:1px"></div>
<div class="t" style="left:13.8px;top:344.6px;font-size:9.08px;color:#dcdcdc;;transform:scaleX(0.802);transform-origin:0 0;">Point</div>
<div class="a" style="left:2.2px;top:356.0px;width:8.9px;height:8px;background:#4a4a4a;border-radius:1px"></div>
<svg style="left:2.5px;top:355.8px" width="9" height="8"><path d="M1.6,4.2 L3.6,6.4 L7.6,1.6" fill="none" stroke="#f4f4f4" stroke-width="1.3"/></svg>
<div class="t" style="left:13.8px;top:354.6px;font-size:9.08px;color:#dcdcdc;;transform:scaleX(0.861);transform-origin:0 0;">Mid</div>
<div class="a" style="left:2.2px;top:366.0px;width:8.9px;height:8px;background:#4a4a4a;border-radius:1px"></div>
<svg style="left:2.5px;top:365.8px" width="9" height="8"><path d="M1.6,4.2 L3.6,6.4 L7.6,1.6" fill="none" stroke="#f4f4f4" stroke-width="1.3"/></svg>
<div class="t" style="left:13.8px;top:364.6px;font-size:9.08px;color:#dcdcdc;;transform:scaleX(0.756);transform-origin:0 0;">Cen</div>
<div class="a" style="left:2.2px;top:376.0px;width:8.9px;height:8px;background:#4a4a4a;border-radius:1px"></div>
<svg style="left:2.5px;top:375.8px" width="9" height="8"><path d="M1.6,4.2 L3.6,6.4 L7.6,1.6" fill="none" stroke="#f4f4f4" stroke-width="1.3"/></svg>
<div class="t" style="left:13.8px;top:374.6px;font-size:9.08px;color:#dcdcdc;;transform:scaleX(0.832);transform-origin:0 0;">Int</div>
<div class="a" style="left:2.2px;top:386.0px;width:8.9px;height:8px;background:#4a4a4a;border-radius:1px"></div>
<div class="t" style="left:13.8px;top:384.6px;font-size:9.08px;color:#dcdcdc;;transform:scaleX(0.745);transform-origin:0 0;">Perp</div>
<div class="a" style="left:2.2px;top:396.0px;width:8.9px;height:8px;background:#4a4a4a;border-radius:1px"></div>
<div class="t" style="left:13.8px;top:394.6px;font-size:9.08px;color:#dcdcdc;;transform:scaleX(0.697);transform-origin:0 0;">Tan</div>
<div class="a" style="left:2.2px;top:406.0px;width:8.9px;height:8px;background:#4a4a4a;border-radius:1px"></div>
<div class="t" style="left:13.8px;top:404.6px;font-size:9.08px;color:#dcdcdc;;transform:scaleX(0.792);transform-origin:0 0;">Quad</div>
<div class="a" style="left:2.2px;top:416.0px;width:8.9px;height:8px;background:#4a4a4a;border-radius:1px"></div>
<div class="t" style="left:13.8px;top:414.6px;font-size:9.08px;color:#dcdcdc;;transform:scaleX(0.808);transform-origin:0 0;">Knot</div>
<div class="a" style="left:2.2px;top:426.0px;width:8.9px;height:8px;background:#4a4a4a;border-radius:1px"></div>
<div class="t" style="left:13.8px;top:424.6px;font-size:9.08px;color:#dcdcdc;;transform:scaleX(0.788);transform-origin:0 0;">Vertex</div>
<div class="a" style="left:2.2px;top:436.0px;width:8.9px;height:8px;background:#4a4a4a;border-radius:1px"></div>
<div class="t" style="left:13.8px;top:434.6px;font-size:9.08px;color:#dcdcdc;;transform:scaleX(0.810);transform-origin:0 0;">Project</div>
<div class="a" style="left:2.2px;top:456.4px;width:8.9px;height:8px;background:#4a4a4a;border-radius:1px"></div>
<div class="t" style="left:13.8px;top:455px;font-size:9.08px;color:#dcdcdc;;transform:scaleX(0.816);transform-origin:0 0;">Disable</div>
<div class="a" style="left:78px;top:96px;width:3px;height:400px;background:#2b2b2b;"></div>
<div class="a" style="left:81px;top:98px;width:839px;height:385px;background:#9ba1a8;"></div>
<div class="a" style="left:81px;top:98px;width:29px;height:11.75px;background:#0f5ef8;border-radius:0 0 3px 0"></div>
<div class="t" style="left:85px;top:98.1px;font-size:9.08px;color:#ffffff;font-weight:bold;transform:scaleX(0.845);transform-origin:0 0;">Top</div>
<div class="a" style="left:103px;top:99px;width:0.8px;height:10px;background:#7fb0ff;"></div>
<svg style="left:104px;top:101px" width="6" height="5"><path d="M0.5,1 H5 L2.75,3.6 Z" fill="#f0f0f0"/></svg>
<svg style="left:100px;top:434px" width="32" height="30"><path d="M3.3,8 V26.7 H21.3" fill="none" stroke="#6e7277" stroke-width="0.8"/></svg>
<div class="t" style="left:104.8px;top:434px;font-size:9.2px;color:#62666b;;">y</div>
<div class="t" style="left:122.5px;top:453.3px;font-size:9.2px;color:#62666b;;">x</div>
<div class="a" style="left:81px;top:483px;width:839px;height:13px;background:#383838;"></div>
<div class="a" style="left:81px;top:483px;width:24.5px;height:13px;background:#2a2a2a;border:0.5px solid #555;border-top:none;border-radius:0 0 3px 3px"></div>
<div class="t" style="left:87.7px;top:484.7px;font-size:9.08px;color:#eeeeee;;transform:scaleX(0.874);transform-origin:0 0;">Top</div>
<div class="a" style="left:106px;top:484px;width:47px;height:12px;background:#444444;"></div>
<div class="t" style="left:111px;top:484.7px;font-size:9.08px;color:#7a7a7a;;transform:scaleX(0.786);transform-origin:0 0;">Perspective</div>
<div class="a" style="left:153.5px;top:485px;width:0.8px;height:10px;background:#6a5030;"></div>
<div class="a" style="left:154.5px;top:484px;width:27px;height:12px;background:#444444;"></div>
<div class="t" style="left:159.4px;top:484.7px;font-size:9.08px;color:#7a7a7a;;transform:scaleX(0.821);transform-origin:0 0;">Front</div>
<div class="a" style="left:181.7px;top:485px;width:0.8px;height:10px;background:#406030;"></div>
<div class="a" style="left:183px;top:484px;width:27.5px;height:12px;background:#444444;"></div>
<div class="t" style="left:187.2px;top:484.7px;font-size:9.08px;color:#7a7a7a;;transform:scaleX(0.839);transform-origin:0 0;">Right</div>
<div class="a" style="left:210.5px;top:485px;width:0.8px;height:10px;background:#5a5a30;"></div>
<div class="t" style="left:215.5px;top:484px;font-size:10px;color:#f0f0f0;font-weight:bold;">+</div>
<svg style="left:0;top:0" width="960" height="540" fill="none" stroke-linejoin="round"><g stroke="#dc3e3e" color="#dc3e3e" stroke-width="1.0"><path d="M225.80,165.00 L250.50,165.00 L258.70,172.70 L258.70,245.70 C257.00,247.30 256.80,251.30 259.20,253.00 C260.80,254.20 262.60,254.20 263.80,255.30 C265.20,256.80 266.20,262.40 270.40,262.40 C274.60,262.40 275.60,256.80 277.00,255.30 C278.20,254.20 280.00,254.20 281.60,253.00 C284.00,251.30 283.80,247.30 281.80,245.70 L281.70,160.60 L251.50,134.00 C250.00,132.50 249.50,131.50 248.80,130.00 C246.50,125.50 243.00,123.40 238.00,123.40 C230.50,123.40 225.80,129.00 225.80,137.50 Z"/><ellipse cx="238.50" cy="139.50" rx="8.4" ry="11.1"/><rect x="235.40" y="154.30" width="5.9" height="5.9" rx="0.8"/><path d="M287.90,229.40 L287.90,146.50 C287.90,145.50 288.50,144.80 289.30,144.20 L319.50,117.10 L319.50,148.90 L310.90,156.70 L311.00,229.40 C313.00,231.00 313.00,235.80 310.80,237.50 C309.20,238.70 307.30,238.60 306.00,239.80 C304.60,241.20 303.40,246.20 299.30,246.20 C295.20,246.20 294.00,241.20 292.60,239.80 C291.30,238.60 289.40,238.70 287.80,237.50 C285.60,235.80 285.60,231.00 287.90,229.40 Z"/><circle cx="299.30" cy="225.00" r="0.9" stroke="none" fill="currentColor"/><circle cx="291.30" cy="233.00" r="0.9" stroke="none" fill="currentColor"/><circle cx="307.40" cy="233.00" r="0.9" stroke="none" fill="currentColor"/><circle cx="299.30" cy="241.00" r="0.9" stroke="none" fill="currentColor"/></g><g stroke="#3f8582" color="#3f8582" stroke-width="1.0"><path d="M334.00,163.70 L358.70,163.70 L366.90,171.40 L366.90,249.70 C365.20,251.30 365.00,255.30 367.40,257.00 C369.00,258.20 370.80,258.20 372.00,259.30 C373.40,260.80 374.40,266.40 378.60,266.40 C382.80,266.40 383.80,260.80 385.20,259.30 C386.40,258.20 388.20,258.20 389.80,257.00 C392.20,255.30 392.00,251.30 390.00,249.70 L389.90,159.30 L359.70,132.70 C358.20,131.20 357.70,130.20 357.00,128.70 C354.70,124.20 351.20,122.10 346.20,122.10 C338.70,122.10 334.00,127.70 334.00,136.20 Z"/><ellipse cx="346.70" cy="138.20" rx="8.4" ry="11.1"/><rect x="343.60" y="153.00" width="5.9" height="5.9" rx="0.8"/><path d="M396.90,235.10 L396.90,147.00 C396.90,146.00 397.50,145.30 398.30,144.70 L428.50,117.60 L428.50,149.40 L419.90,157.20 L420.00,235.10 C422.00,236.70 422.00,241.50 419.80,243.20 C418.20,244.40 416.30,244.30 415.00,245.50 C413.60,246.90 412.40,251.90 408.30,251.90 C404.20,251.90 403.00,246.90 401.60,245.50 C400.30,244.30 398.40,244.40 396.80,243.20 C394.60,241.50 394.60,236.70 396.90,235.10 Z"/><circle cx="408.30" cy="230.70" r="0.9" stroke="none" fill="currentColor"/><circle cx="400.30" cy="238.70" r="0.9" stroke="none" fill="currentColor"/><circle cx="416.40" cy="238.70" r="0.9" stroke="none" fill="currentColor"/><circle cx="408.30" cy="246.70" r="0.9" stroke="none" fill="currentColor"/></g><g stroke="#dc3e3e" color="#dc3e3e" stroke-width="1.0"><path d="M442.50,165.00 L467.20,165.00 L475.40,172.70 L475.40,245.70 C473.70,247.30 473.50,251.30 475.90,253.00 C477.50,254.20 479.30,254.20 480.50,255.30 C481.90,256.80 482.90,262.40 487.10,262.40 C491.30,262.40 492.30,256.80 493.70,255.30 C494.90,254.20 496.70,254.20 498.30,253.00 C500.70,251.30 500.50,247.30 498.50,245.70 L498.40,160.60 L468.20,134.00 C466.70,132.50 466.20,131.50 465.50,130.00 C463.20,125.50 459.70,123.40 454.70,123.40 C447.20,123.40 442.50,129.00 442.50,137.50 Z"/><ellipse cx="455.20" cy="139.50" rx="8.4" ry="11.1"/><rect x="452.10" y="154.30" width="5.9" height="5.9" rx="0.8"/><path d="M504.70,229.40 L504.70,146.50 C504.70,145.50 505.30,144.80 506.10,144.20 L536.30,117.10 L536.30,148.90 L527.70,156.70 L527.80,229.40 C529.80,231.00 529.80,235.80 527.60,237.50 C526.00,238.70 524.10,238.60 522.80,239.80 C521.40,241.20 520.20,246.20 516.10,246.20 C512.00,246.20 510.80,241.20 509.40,239.80 C508.10,238.60 506.20,238.70 504.60,237.50 C502.40,235.80 502.40,231.00 504.70,229.40 Z"/><circle cx="516.10" cy="225.00" r="0.9" stroke="none" fill="currentColor"/><circle cx="508.10" cy="233.00" r="0.9" stroke="none" fill="currentColor"/><circle cx="524.20" cy="233.00" r="0.9" stroke="none" fill="currentColor"/><circle cx="516.10" cy="241.00" r="0.9" stroke="none" fill="currentColor"/></g><g stroke="#2a2a2a" color="#2a2a2a" stroke-width="0.9"><path d="M557.20,163.70 L581.90,163.70 L590.10,171.40 L590.10,239.20 C588.40,240.80 588.20,244.80 590.60,246.50 C592.20,247.70 594.00,247.70 595.20,248.80 C596.60,250.30 597.60,255.90 601.80,255.90 C606.00,255.90 607.00,250.30 608.40,248.80 C609.60,247.70 611.40,247.70 613.00,246.50 C615.40,244.80 615.20,240.80 613.20,239.20 L613.10,159.30 L582.90,132.70 C581.40,131.20 580.90,130.20 580.20,128.70 C577.90,124.20 574.40,122.10 569.40,122.10 C561.90,122.10 557.20,127.70 557.20,136.20 Z"/><ellipse cx="569.90" cy="138.20" rx="8.4" ry="11.1"/><rect x="566.80" y="153.00" width="5.9" height="5.9" rx="0.8"/><path d="M619.70,226.20 L619.70,148.70 C619.70,147.70 620.30,147.00 621.10,146.40 L651.30,119.30 L651.30,151.10 L642.70,158.90 L642.80,226.20 C644.80,227.80 644.80,232.60 642.60,234.30 C641.00,235.50 639.10,235.40 637.80,236.60 C636.40,238.00 635.20,243.00 631.10,243.00 C627.00,243.00 625.80,238.00 624.40,236.60 C623.10,235.40 621.20,235.50 619.60,234.30 C617.40,232.60 617.40,227.80 619.70,226.20 Z"/><circle cx="631.10" cy="221.80" r="0.9" stroke="none" fill="currentColor"/><circle cx="623.10" cy="229.80" r="0.9" stroke="none" fill="currentColor"/><circle cx="639.20" cy="229.80" r="0.9" stroke="none" fill="currentColor"/><circle cx="631.10" cy="237.80" r="0.9" stroke="none" fill="currentColor"/></g><g stroke="#3f9a3f" color="#3f9a3f" stroke-width="1.0"><path d="M680.4,141.9 L680.4,160.3 L689,167.8 L689.1,231.5 C690.5,233 691.5,234 692.5,236 C694,239 695.5,240.3 697.5,240.3 C699.5,240.3 701,239 702.5,236 C703.5,234 704.8,233 706.6,231.5 L706.1,163.9 Z"/><path d="M708.3,231.2 L708.5,163.3 L734,141.2 C735.5,139.5 735.8,137 737,134 C739,130.5 742.5,128.8 746.6,128.8 C753.5,128.8 758.5,134 758.5,141 L758.5,158.5 L734.9,158.5 L725.4,167.7 L725.7,231.2 C724,233 723,234 722.5,235.5 C721,238 719.5,239 717.6,239 C715.6,239 714,238 712.8,235.5 C712,234 710.5,233 708.3,231.2 Z"/><ellipse cx="746.6" cy="144.4" rx="7.4" ry="11"/><circle cx="697.5" cy="235.4" r="0.9" fill="#3f9a3f" stroke="none"/></g><g stroke="#b95858" color="#b95858" stroke-width="0.75"><path d="M147,332.2 C149.79,332.20 157.83,332.73 163.75,332.20 C169.67,331.67 176.88,329.99 182.50,329.00 C188.12,328.01 192.71,327.33 197.50,326.25 C202.29,325.17 207.08,324.06 211.25,322.50 C215.42,320.94 218.96,318.67 222.50,316.90 C226.04,315.13 228.75,313.57 232.50,311.90 C236.25,310.23 241.25,308.12 245.00,306.90 C248.75,305.68 251.57,305.12 255.00,304.60 C258.43,304.08 261.10,303.68 265.60,303.80 C270.10,303.92 279.27,305.05 282.00,305.30 L435.2,332 L427.2,376.1 C422.12,375.92 407.35,375.05 396.70,375.00 C386.05,374.95 370.42,375.40 363.30,375.80 C356.18,376.20 356.63,376.65 354.00,377.40 C351.37,378.15 348.58,379.82 347.50,380.30 C350.70,381.78 360.73,386.62 366.70,389.20 C372.67,391.78 376.08,393.95 383.30,395.80 C390.52,397.65 401.10,399.65 410.00,400.30 C418.90,400.95 428.37,399.80 436.70,399.70 C445.03,399.60 452.92,399.28 460.00,399.70 C467.08,400.12 476.00,401.78 479.20,402.20 L471.3,448.3 C467.20,448.17 456.92,448.00 446.70,447.50 C436.48,447.00 418.90,445.63 410.00,445.30 C401.10,444.97 398.30,445.27 393.30,445.50 C388.30,445.73 388.88,445.67 380.00,446.70 C371.12,447.73 351.67,450.73 340.00,451.70 C328.33,452.67 319.45,453.33 310.00,452.50 C300.55,451.67 292.47,448.45 283.30,446.70 C274.13,444.95 262.50,442.90 255.00,442.00 C247.50,441.10 243.85,441.22 238.30,441.30 C232.75,441.38 229.70,441.60 221.70,442.50 C213.70,443.40 195.53,446.00 190.30,446.70 L191.3,402.2 C194.13,402.20 203.23,402.43 208.30,402.20 C213.37,401.97 214.75,402.00 221.70,400.80 C228.65,399.60 241.67,397.77 250.00,395.00 C258.33,392.23 266.15,386.65 271.70,384.20 C277.25,381.75 281.37,380.95 283.30,380.30 C281.63,380.67 276.63,382.22 273.30,382.50 C269.97,382.78 269.13,382.97 263.30,382.00 C257.47,381.03 247.47,378.42 238.30,376.70 C229.13,374.98 216.35,372.67 208.30,371.70 C200.25,370.73 200.22,370.10 190.00,370.90 C179.78,371.70 154.17,375.57 147.00,376.50 Z"/><ellipse cx="258.9" cy="351.2" rx="20" ry="15.2"/><circle cx="290.2" cy="313.5" r="0.8" fill="#b95858" stroke="none"/><circle cx="281.5" cy="320" r="0.8" fill="#b95858" stroke="none"/><circle cx="316.1" cy="318.5" r="0.8" fill="#b95858" stroke="none"/><circle cx="296.7" cy="322.8" r="0.8" fill="#b95858" stroke="none"/><circle cx="306.9" cy="324.6" r="0.8" fill="#b95858" stroke="none"/><circle cx="343.9" cy="322.4" r="0.8" fill="#b95858" stroke="none"/><circle cx="287.8" cy="328.9" r="0.8" fill="#b95858" stroke="none"/><circle cx="322.6" cy="328" r="0.8" fill="#b95858" stroke="none"/><circle cx="334.1" cy="328" r="0.8" fill="#b95858" stroke="none"/><circle cx="368" cy="329.8" r="0.8" fill="#b95858" stroke="none"/><circle cx="313.3" cy="333.9" r="0.8" fill="#b95858" stroke="none"/><circle cx="349.4" cy="332.4" r="0.8" fill="#b95858" stroke="none"/><circle cx="339.3" cy="337.6" r="0.8" fill="#b95858" stroke="none"/><circle cx="359.1" cy="337" r="0.8" fill="#b95858" stroke="none"/><circle cx="374.8" cy="338.5" r="0.8" fill="#b95858" stroke="none"/><circle cx="366.1" cy="345.9" r="0.8" fill="#b95858" stroke="none"/><circle cx="284.6" cy="365.9" r="0.8" fill="#b95858" stroke="none"/></g><g stroke="#b95858" color="#b95858" stroke-width="0.75"><g transform="translate(979,-3) scale(-1,1)"><path d="M147,332.2 C149.79,332.20 157.83,332.73 163.75,332.20 C169.67,331.67 176.88,329.99 182.50,329.00 C188.12,328.01 192.71,327.33 197.50,326.25 C202.29,325.17 207.08,324.06 211.25,322.50 C215.42,320.94 218.96,318.67 222.50,316.90 C226.04,315.13 228.75,313.57 232.50,311.90 C236.25,310.23 241.25,308.12 245.00,306.90 C248.75,305.68 251.57,305.12 255.00,304.60 C258.43,304.08 261.10,303.68 265.60,303.80 C270.10,303.92 279.27,305.05 282.00,305.30 L435.2,332 L427.2,376.1 C422.12,375.92 407.35,375.05 396.70,375.00 C386.05,374.95 370.42,375.40 363.30,375.80 C356.18,376.20 356.63,376.65 354.00,377.40 C351.37,378.15 348.58,379.82 347.50,380.30 C350.70,381.78 360.73,386.62 366.70,389.20 C372.67,391.78 376.08,393.95 383.30,395.80 C390.52,397.65 401.10,399.65 410.00,400.30 C418.90,400.95 428.37,399.80 436.70,399.70 C445.03,399.60 452.92,399.28 460.00,399.70 C467.08,400.12 476.00,401.78 479.20,402.20 L471.3,448.3 C467.20,448.17 456.92,448.00 446.70,447.50 C436.48,447.00 418.90,445.63 410.00,445.30 C401.10,444.97 398.30,445.27 393.30,445.50 C388.30,445.73 388.88,445.67 380.00,446.70 C371.12,447.73 351.67,450.73 340.00,451.70 C328.33,452.67 319.45,453.33 310.00,452.50 C300.55,451.67 292.47,448.45 283.30,446.70 C274.13,444.95 262.50,442.90 255.00,442.00 C247.50,441.10 243.85,441.22 238.30,441.30 C232.75,441.38 229.70,441.60 221.70,442.50 C213.70,443.40 195.53,446.00 190.30,446.70 L191.3,402.2 C194.13,402.20 203.23,402.43 208.30,402.20 C213.37,401.97 214.75,402.00 221.70,400.80 C228.65,399.60 241.67,397.77 250.00,395.00 C258.33,392.23 266.15,386.65 271.70,384.20 C277.25,381.75 281.37,380.95 283.30,380.30 C281.63,380.67 276.63,382.22 273.30,382.50 C269.97,382.78 269.13,382.97 263.30,382.00 C257.47,381.03 247.47,378.42 238.30,376.70 C229.13,374.98 216.35,372.67 208.30,371.70 C200.25,370.73 200.22,370.10 190.00,370.90 C179.78,371.70 154.17,375.57 147.00,376.50 Z"/><ellipse cx="258.9" cy="351.2" rx="20" ry="15.2"/></g></g><circle cx="324" cy="362.2" r="0.5" fill="#4a9a4a"/><circle cx="698.2" cy="249.9" r="0.5" fill="#5a9a5a"/><circle cx="716.3" cy="248.4" r="0.5" fill="#5a9a5a"/></svg>
<div class="a" style="left:920px;top:96px;width:40px;height:400px;background:#2b2b2b;"></div>
<div class="a" style="left:947px;top:131px;width:13px;height:365px;background:#444444;border-radius:4px 0 0 0"></div>
<div class="a" style="left:921px;top:97px;width:26px;height:399px;background:#333333;border-radius:5px 0 0 0"></div>
<div class="a" style="left:947px;top:97px;width:13px;height:34px;background:#333333;border-radius:0 5px 0 0"></div>
<div class="t" style="left:922.2px;top:97.6px;font-size:9.08px;color:#8a8f96;;transform:scaleX(0.734);transform-origin:0 0;">Layers</div>
<svg style="left:948px;top:98px" width="10" height="10"><circle cx="5" cy="5" r="3.2" fill="none" stroke="#cfcfcf" stroke-width="1.8" stroke-dasharray="1.6 0.9"/><circle cx="5" cy="5" r="2.4" fill="none" stroke="#cfcfcf" stroke-width="1.2"/></svg>
<svg style="left:922.5px;top:115.0px" width="11.5" height="11.5" viewBox="0 0 16 16"><path d="M1.5,5 L11,2.5 L14.5,6.5 L4,10 Z" fill="#f07040"/><path d="M1.5,7 L4,10 L14.5,6.5 V8.5 L4,12 L1.5,9 Z" fill="#e8e8e8"/><path d="M1.5,9 L4,12 L14.5,8.5 V10.5 L4,14 L1.5,11 Z" fill="#2040c0"/><path d="M4,10 L14.5,6.5 V8 L4,11.5 Z" fill="#e02020"/><circle cx="11.5" cy="11" r="3" fill="#111" stroke="#eee" stroke-width="1"/></svg>
<svg style="left:921.8px;top:127.0px" width="13" height="13" viewBox="0 0 16 16"><rect x="3" y="2" width="5" height="5" fill="none" stroke="#8c8c8c" stroke-width="1"/><rect x="3" y="8" width="4" height="5" fill="none" stroke="#8c8c8c" stroke-width="1"/><circle cx="10" cy="11" r="3" fill="none" stroke="#8c8c8c" stroke-width="1"/></svg>
<svg style="left:921.8px;top:140.5px" width="13" height="13" viewBox="0 0 16 16"><path d="M3,3 L13,13 M13,3 L3,13" stroke="#8c8c8c" stroke-width="1.4"/></svg>
<svg style="left:921.8px;top:154.0px" width="13" height="13" viewBox="0 0 16 16"><circle cx="7" cy="8" r="5" fill="none" stroke="#8c8c8c" stroke-width="1.1"/><circle cx="10" cy="10" r="3.5" fill="none" stroke="#8c8c8c" stroke-width="1.1"/></svg>
<svg style="left:921.8px;top:167.5px" width="13" height="13" viewBox="0 0 16 16"><path d="M3,11 L8,5.5 L13,11 Z" fill="#3a3a3a" stroke="#8c8c8c" stroke-width="1"/></svg>
<svg style="left:921.8px;top:181.5px" width="13" height="13" viewBox="0 0 16 16"><path d="M3,5 L8,10.5 L13,5 Z" fill="#3a3a3a" stroke="#8c8c8c" stroke-width="1"/></svg>
<svg style="left:921.8px;top:195.5px" width="13" height="13" viewBox="0 0 16 16"><path d="M11,3 L5,8 L11,13 Z" fill="#3a3a3a" stroke="#8c8c8c" stroke-width="1"/></svg>
<svg style="left:921.8px;top:209.0px" width="13" height="13" viewBox="0 0 16 16"><path d="M3,3 H13 L9,8 V13 H7 V8 Z" fill="#3a70e0"/></svg>
<svg style="left:921.8px;top:223.0px" width="13" height="13" viewBox="0 0 16 16"><rect x="3" y="3" width="10" height="10" fill="#eee"/><path d="M3,6.3 H13 M3,9.6 H13 M6.3,3 V13 M9.6,3 V13" stroke="#333" stroke-width=".8"/></svg>
<svg style="left:921.8px;top:237.0px" width="13" height="13" viewBox="0 0 16 16"><path d="M3,4 H13 M3,8 H13 M3,12 H13" stroke="#e0e0e0" stroke-width="1.5"/></svg>
<svg style="left:921.8px;top:251.0px" width="13" height="13" viewBox="0 0 16 16"><circle cx="8" cy="8" r="5.5" fill="#2a55c8"/><path d="M6.2,6.5 C6.2,4.2 10,4.2 10,6.5 C10,7.8 8.3,8 8.3,9.5" fill="none" stroke="#f0f0f0" stroke-width="1.2"/><rect x="7.6" y="10.5" width="1.4" height="1.4" fill="#f0f0f0"/></svg>
<svg style="left:948.0px;top:115.0px" width="11" height="11" viewBox="0 0 16 16"><path d="M1.5,5 L11,2.5 L14.5,6.5 L4,10 Z" fill="#f07040"/><path d="M1.5,7 L4,10 L14.5,6.5 V8.5 L4,12 L1.5,9 Z" fill="#e8e8e8"/><path d="M1.5,9 L4,12 L14.5,8.5 V10.5 L4,14 L1.5,11 Z" fill="#2040c0"/><path d="M4,10 L14.5,6.5 V8 L4,11.5 Z" fill="#e02020"/></svg>
<svg style="left:948.0px;top:136.5px" width="11" height="11" viewBox="0 0 16 16"><circle cx="8" cy="8" r="4.5" fill="none" stroke="url(#cw)" stroke-width="2.5"/></svg>
<svg style="left:947.0px;top:157.5px" width="13" height="13" viewBox="0 0 16 16"><rect x="2.5" y="4" width="11" height="8" fill="#e8e8e8" stroke="#111" stroke-width=".8"/><path d="M2.5,12 H13.5" stroke="#111" stroke-width="1.4"/></svg>
<svg style="left:947.0px;top:180.5px" width="13" height="13" viewBox="0 0 16 16"><rect x="2" y="3" width="12" height="10" fill="#3a64d0"/><path d="M6,6 C6,4 10,4 10,6 C10,7.5 8,7.5 8,9" fill="none" stroke="#eee" stroke-width="1"/><rect x="4" y="11" width="8" height="1" fill="#9ab"/></svg>
<div class="a" style="left:922px;top:268px;width:24px;height:14px;background:#4e4e4e;border-radius:7px"></div>
<svg style="left:924px;top:270px" width="10" height="10"><circle cx="4" cy="4" r="2.6" fill="none" stroke="#e0e0e0" stroke-width="1"/><path d="M6,6 L8.5,8.5" stroke="#e0e0e0" stroke-width="1.2"/></svg>
<div class="a" style="left:933.5px;top:272px;width:0.8px;height:6px;background:#4a7abf;"></div>
<div class="a" style="left:922px;top:285px;width:22.5px;height:211px;background:#242424;"></div>
<div class="t" style="left:925px;top:287.2px;font-size:9.08px;color:#e8e8e8;;transform:scaleX(0.748);transform-origin:0 0;">Layer</div>
<div class="a" style="left:922px;top:299.2px;width:22.5px;height:130.5px;overflow:hidden;background:#222">
<div class="a" style="left:0;top:0.00px;width:23px;height:0.9px;background:#2e2e2e"></div>
<div class="a" style="left:0;top:11.85px;width:23px;height:0.9px;background:#2e2e2e"></div>
<div class="a" style="left:0;top:23.70px;width:23px;height:0.9px;background:#2e2e2e"></div>
<div class="a" style="left:0;top:35.55px;width:23px;height:0.9px;background:#2e2e2e"></div>
<div class="a" style="left:0;top:47.40px;width:23px;height:0.9px;background:#2e2e2e"></div>
<div class="a" style="left:0;top:59.25px;width:23px;height:0.9px;background:#2e2e2e"></div>
<div class="a" style="left:0;top:71.10px;width:23px;height:0.9px;background:#2e2e2e"></div>
<div class="a" style="left:0;top:82.95px;width:23px;height:0.9px;background:#2e2e2e"></div>
<div class="a" style="left:0;top:94.80px;width:23px;height:0.9px;background:#2e2e2e"></div>
<div class="a" style="left:0;top:106.65px;width:23px;height:0.9px;background:#2e2e2e"></div>
<div class="a" style="left:0;top:118.50px;width:23px;height:0.9px;background:#2e2e2e"></div>
<div class="a" style="left:0;top:129.5px;width:23px;height:0.9px;background:#2e2e2e"></div>
<div class="t" style="left:10px;top:0.4px;font-size:9.08px;color:#e2e2e2;transform:scaleX(.8);transform-origin:0 0;">Layer 01</div>
<div class="t" style="left:10px;top:12.25px;font-size:9.08px;color:#e2e2e2;transform:scaleX(.8);transform-origin:0 0;">CORTEES</div>
<div class="t" style="left:10px;top:24.1px;font-size:9.08px;color:#e2e2e2;transform:scaleX(.8);transform-origin:0 0;">INDICE</div>
<div class="t" style="left:10px;top:35.95px;font-size:9.08px;color:#e2e2e2;transform:scaleX(.8);transform-origin:0 0;">medio</div>
<div class="t" style="left:10px;top:47.8px;font-size:9.08px;color:#e2e2e2;transform:scaleX(.8);transform-origin:0 0;">MENIQUE</div>
<div class="t" style="left:10px;top:59.65px;font-size:9.08px;color:#e2e2e2;transform:scaleX(.8);transform-origin:0 0;">GRANDE</div>
<div class="t" style="left:10px;top:71.5px;font-size:9.08px;color:#e2e2e2;transform:scaleX(.8);transform-origin:0 0;">Layer 02</div>
<div class="t" style="left:10px;top:83.35px;font-size:9.08px;color:#e2e2e2;transform:scaleX(.8);transform-origin:0 0;font-weight:bold;">CORTEES</div>
<div class="t" style="left:10px;top:95.2px;font-size:9.08px;color:#e2e2e2;transform:scaleX(.8);transform-origin:0 0;">MANO</div>
<div class="t" style="left:10px;top:107.05px;font-size:9.08px;color:#e2e2e2;transform:scaleX(.8);transform-origin:0 0;">nuevo</div>
<div class="t" style="left:10px;top:118.9px;font-size:9.08px;color:#e2e2e2;transform:scaleX(.8);transform-origin:0 0;">0</div>
</div>
<div class="a" style="left:925.8px;top:488.4px;width:11.7px;height:5.2px;background:#8a8a8a;border-radius:3px;border:0.6px solid #aaa"></div>
<div class="a" style="left:0px;top:496px;width:960px;height:14px;background:#323232;"></div>
<div class="a" style="left:0px;top:97px;width:1px;height:413px;background:#3c3c3c;"></div>
<svg style="left:4px;top:498.8px" width="10" height="10"><rect x="0.5" y="0.5" width="8.3" height="8.3" fill="#d8d8d8" stroke="#e0e0e0" stroke-width="1"/><rect x="3.8" y="1.5" width="4" height="6.3" fill="#1e1e1e"/></svg>
<div class="t" style="left:26.25px;top:498.25px;font-size:9.08px;color:#d0d0d0;;transform:scaleX(0.756);transform-origin:0 0;">CPlane</div>
<div class="t" style="left:70px;top:498.25px;font-size:9.08px;color:#d0d0d0;;transform:scaleX(0.779);transform-origin:0 0;">x 1741.996</div>
<div class="t" style="left:121.25px;top:498.25px;font-size:9.08px;color:#d0d0d0;;transform:scaleX(0.820);transform-origin:0 0;">y -1150.430</div>
<div class="t" style="left:189.5px;top:498.25px;font-size:9.08px;color:#d0d0d0;;transform:scaleX(0.763);transform-origin:0 0;">z 0</div>
<div class="t" style="left:233.75px;top:498.25px;font-size:9.08px;color:#d0d0d0;;transform:scaleX(0.836);transform-origin:0 0;">Millimeters</div>
<div class="t" style="left:299.5px;top:498.25px;font-size:9.08px;color:#d0d0d0;;transform:scaleX(0.669);transform-origin:0 0;">CORTEES</div>
<div class="t" style="left:409.5px;top:498.25px;font-size:9.08px;color:#d0d0d0;;transform:scaleX(0.795);transform-origin:0 0;">Grid Snap</div>
<div class="t" style="left:453.75px;top:498.25px;font-size:9.08px;color:#d0d0d0;;transform:scaleX(0.880);transform-origin:0 0;">Ortho</div>
<div class="t" style="left:687px;top:498.25px;font-size:9.08px;color:#d0d0d0;;transform:scaleX(0.807);transform-origin:0 0;">Auto CPlane (Object)</div>
<div class="t" style="left:833.75px;top:498.25px;font-size:9.08px;color:#d0d0d0;;transform:scaleX(0.805);transform-origin:0 0;">Filter</div>
<div class="t" style="left:864px;top:498.25px;font-size:9.08px;color:#d0d0d0;;transform:scaleX(0.848);transform-origin:0 0;">Absolute toleranc</div>
<div class="a" style="left:284.5px;top:498px;width:11px;height:10.75px;background:#111;border:0.9px solid #d0d0d0;border-radius:1px"></div>
<div class="a" style="left:480.5px;top:497px;width:31.25px;height:11.8px;background:#3b5191;border-radius:1.5px"></div>
<div class="t" style="left:485.5px;top:498.25px;font-size:8.97px;color:#f2f2f2;font-weight:bold;transform:scaleX(0.802);transform-origin:0 0;">Planar</div>
<div class="a" style="left:514.25px;top:497px;width:30.25px;height:11.8px;background:#3b5191;border-radius:1.5px"></div>
<div class="t" style="left:519px;top:498.25px;font-size:8.97px;color:#f2f2f2;font-weight:bold;transform:scaleX(0.797);transform-origin:0 0;">Osnap</div>
<div class="a" style="left:547.5px;top:497px;width:48.75px;height:11.8px;background:#3b5191;border-radius:1.5px"></div>
<div class="t" style="left:552.5px;top:498.25px;font-size:8.97px;color:#f2f2f2;font-weight:bold;transform:scaleX(0.808);transform-origin:0 0;">SmartTrack</div>
<div class="a" style="left:598.25px;top:497px;width:70.5px;height:11.8px;background:#3b5191;border-radius:1.5px"></div>
<div class="t" style="left:603.75px;top:498.25px;font-size:8.97px;color:#f2f2f2;font-weight:bold;transform:scaleX(0.809);transform-origin:0 0;">Gumball (CPlane)</div>
<div class="a" style="left:764.5px;top:497px;width:61.75px;height:11.8px;background:#3b5191;border-radius:1.5px"></div>
<div class="t" style="left:770px;top:498.25px;font-size:8.97px;color:#f2f2f2;font-weight:bold;transform:scaleX(0.809);transform-origin:0 0;">Record History</div>
<svg style="left:674px;top:498px" width="8" height="10"><path d="M2,4.5 V3 C2,0.8 6,0.8 6,3 V4.5" fill="none" stroke="#ddd" stroke-width="1"/><rect x="1" y="4.5" width="6" height="4.5" fill="#eee"/></svg>
<svg style="left:947px;top:498.8px" width="10" height="10"><rect x="0.5" y="0.5" width="8.3" height="8.3" fill="#d8d8d8" stroke="#e0e0e0" stroke-width="1"/><rect x="1.5" y="1.5" width="4" height="6.3" fill="#1e1e1e"/></svg>
<div class="a" style="left:959px;top:496px;width:1px;height:14px;background:#3a3a3a;"></div>
<div class="a" style="left:0px;top:510px;width:960px;height:30px;background:#4a7650;"></div>
</body></html>
